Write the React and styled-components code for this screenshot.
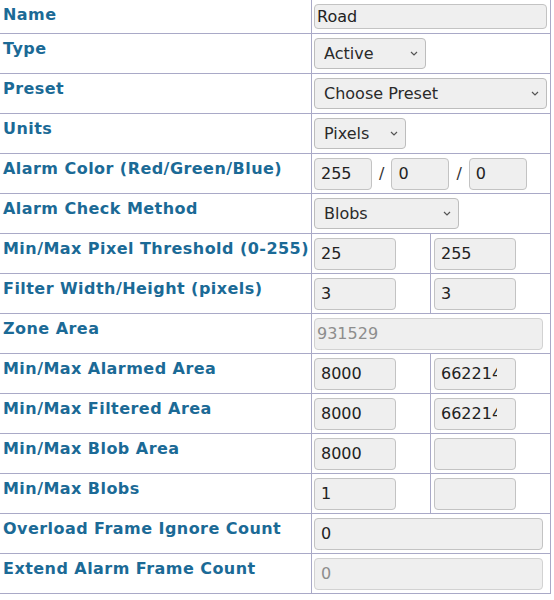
import React from "react";
import styled, { createGlobalStyle } from "styled-components";

const GlobalStyle = createGlobalStyle`
  body {
    margin: 0;
    background: #ffffff;
    font-family: "DejaVu Sans", Verdana, sans-serif;
  }
`;

const Table = styled.div`
  display: flex;
  flex-direction: column;
  width: 551px;
`;

const Row = styled.div`
  display: flex;
  box-sizing: border-box;
  height: ${(props) => (props.short ? "34px" : "40px")};
  border-bottom: 1px solid #a9a9c7;
  border-right: 1px solid #a9a9c7;
`;

const Label = styled.div`
  box-sizing: border-box;
  width: 312px;
  flex-shrink: 0;
  padding: 5px 3px 0;
  border-right: 1px solid #a9a9c7;
  color: #1b6a96;
  font-size: 16px;
  font-weight: bold;
  letter-spacing: 0.45px;
  white-space: nowrap;
`;

const Cell = styled.div`
  box-sizing: border-box;
  display: flex;
  align-items: center;
  gap: 6px;
  padding: 0 2px;
  ${(props) =>
    props.split
      ? "width: 119px; flex-shrink: 0; border-right: 1px solid #a9a9c7;"
      : "flex: 1;"}
  ${(props) => (props.second ? "padding-left: 3px;" : "")}
`;

const TextInput = styled.input`
  box-sizing: border-box;
  width: ${(props) => props.w}px;
  height: ${(props) => props.h || 32}px;
  padding: 0 ${(props) => props.pr || 6}px 0 ${(props) => (props.tight ? 2 : 6)}px;
  margin: 0;
  background: #efefef;
  border: 1px solid #c3c3c3;
  border-radius: 4px;
  font-family: "DejaVu Sans", Verdana, sans-serif;
  font-size: 16px;
  color: #222222;
  outline: none;
  &:disabled {
    color: #8d8d8d;
    border-color: #d2d2d2;
  }
`;

const SelectWrap = styled.div`
  position: relative;
  width: ${(props) => props.w}px;
  height: 31px;
`;

const Select = styled.select`
  box-sizing: border-box;
  appearance: none;
  width: 100%;
  height: 100%;
  margin: 0;
  padding: 0 24px 0 9px;
  background: #efefef;
  border: 1px solid #bdbdbd;
  border-radius: 4px;
  font-family: "DejaVu Sans", Verdana, sans-serif;
  font-size: 16px;
  color: #2a2a2a;
`;

const Chevron = styled.svg`
  position: absolute;
  right: 8px;
  top: 13px;
  pointer-events: none;
`;

const Slash = styled.span`
  padding: 0 1px;
  font-size: 16px;
  color: #333333;
`;

const Dropdown = ({ w, value, options }) => (
  <SelectWrap w={w}>
    <Select defaultValue={value}>
      {options.map((o) => (
        <option key={o}>{o}</option>
      ))}
    </Select>
    <Chevron width="8" height="5" viewBox="0 0 8 5">
      <polyline points="1,1 4,4 7,1" fill="none" stroke="#555" strokeWidth="1.2" />
    </Chevron>
  </SelectWrap>
);

const Pair = ({ label, min, max }) => (
  <Row>
    <Label>{label}</Label>
    <Cell split>
      <TextInput w={82} pr={18} defaultValue={min} />
    </Cell>
    <Cell second>
      <TextInput w={82} pr={18} defaultValue={max} />
    </Cell>
  </Row>
);

const App = () => (
  <>
    <GlobalStyle />
    <Table>
      <Row short>
        <Label>Name</Label>
        <Cell>
          <TextInput w={233} h={25} tight defaultValue="Road" />
        </Cell>
      </Row>
      <Row>
        <Label>Type</Label>
        <Cell>
          <Dropdown w={112} value="Active" options={["Active", "Inclusive", "Exclusive", "Preclusive", "Inactive"]} />
        </Cell>
      </Row>
      <Row>
        <Label>Preset</Label>
        <Cell>
          <Dropdown w={233} value="Choose Preset" options={["Choose Preset"]} />
        </Cell>
      </Row>
      <Row>
        <Label>Units</Label>
        <Cell>
          <Dropdown w={92} value="Pixels" options={["Pixels", "Percent"]} />
        </Cell>
      </Row>
      <Row>
        <Label>Alarm Color (Red/Green/Blue)</Label>
        <Cell>
          <TextInput w={58} defaultValue="255" />
          <Slash>/</Slash>
          <TextInput w={58} defaultValue="0" />
          <Slash>/</Slash>
          <TextInput w={58} defaultValue="0" />
        </Cell>
      </Row>
      <Row>
        <Label>Alarm Check Method</Label>
        <Cell>
          <Dropdown w={145} value="Blobs" options={["AlarmedPixels", "FilteredPixels", "Blobs"]} />
        </Cell>
      </Row>
      <Pair label="Min/Max Pixel Threshold (0-255)" min="25" max="255" />
      <Pair label="Filter Width/Height (pixels)" min="3" max="3" />
      <Row>
        <Label>Zone Area</Label>
        <Cell>
          <TextInput w={229} tight disabled defaultValue="931529" />
        </Cell>
      </Row>
      <Pair label="Min/Max Alarmed Area" min="8000" max="662214" />
      <Pair label="Min/Max Filtered Area" min="8000" max="662214" />
      <Pair label="Min/Max Blob Area" min="8000" max="" />
      <Pair label="Min/Max Blobs" min="1" max="" />
      <Row>
        <Label>Overload Frame Ignore Count</Label>
        <Cell>
          <TextInput w={229} defaultValue="0" />
        </Cell>
      </Row>
      <Row>
        <Label>Extend Alarm Frame Count</Label>
        <Cell>
          <TextInput w={229} disabled defaultValue="0" />
        </Cell>
      </Row>
    </Table>
  </>
);

export default App;
